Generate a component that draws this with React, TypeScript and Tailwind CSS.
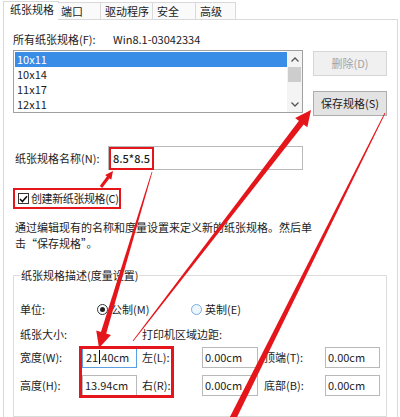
import React from 'react';

// Windows "打印服务器属性 > 纸张规格" page, with the red annotation arrows on top.

type P = [number, number];

const RED = '#e5161b';

const TABS = [
  { label: '纸张规格', cls: 'w-[56px] h-[19px] pl-[6px] pb-[3px] -mb-px bg-white border-x border-t border-[#d9d9d9]' },
  { label: '端口', cls: 'w-[43px] h-[17px] pl-[3px] -ml-px bg-[#fafafa] border-r border-t border-[#d9d9d9]' },
  { label: '驱动程序', cls: 'w-[52px] h-[17px] pl-[4px] bg-[#fafafa] border-r border-t border-[#d9d9d9]' },
  { label: '安全', cls: 'w-[43px] h-[17px] pl-[4px] bg-[#fafafa] border-r border-t border-[#d9d9d9]' },
  { label: '高级', cls: 'w-[40px] h-[17px] pl-[4px] bg-[#fafafa] border-r border-t border-[#d9d9d9]' },
];

const SIZES = ['10x11', '10x14', '11x17', '12x11'];

function taper(a: P, b: P, wa: number, wb: number): string {
  const dx = b[0] - a[0];
  const dy = b[1] - a[1];
  const l = Math.hypot(dx, dy);
  const nx = -dy / l;
  const ny = dx / l;
  const pts: P[] = [
    [a[0] + (nx * wa) / 2, a[1] + (ny * wa) / 2],
    [b[0] + (nx * wb) / 2, b[1] + (ny * wb) / 2],
    [b[0] - (nx * wb) / 2, b[1] - (ny * wb) / 2],
    [a[0] - (nx * wa) / 2, a[1] - (ny * wa) / 2],
  ];
  return pts.map((p) => p.join(',')).join(' ');
}

function Arrow({ from, tip, w0, w1, head }: { from: P; tip: P; w0: number; w1: number; head: number }) {
  const dx = tip[0] - from[0];
  const dy = tip[1] - from[1];
  const l = Math.hypot(dx, dy);
  const ux = dx / l;
  const uy = dy / l;
  const base: P = [tip[0] - ux * head, tip[1] - uy * head];
  const hw = head * 0.48;
  const headPts = [tip, [base[0] - uy * hw, base[1] + ux * hw], [base[0] + uy * hw, base[1] - ux * hw]]
    .map((p) => p.join(','))
    .join(' ');
  return (
    <g fill={RED}>
      <polygon points={taper(from, [base[0] + ux * 2, base[1] + uy * 2], w0, w1)} />
      <polygon points={headPts} />
    </g>
  );
}

function Field({ children, w, focus }: { children: React.ReactNode; w: string; focus?: boolean }) {
  return (
    <div className={`${w} h-[21px] flex items-center border bg-white ${focus ? 'border-[#5b9fe3] pl-[3px]' : 'border-[#b9b9b9] pl-[2px]'}`}>
      {children}
    </div>
  );
}

function Radio({ on }: { on?: boolean }) {
  return on ? (
    <span className="w-[11px] h-[11px] rounded-full border border-[#333] flex items-center justify-center bg-white">
      <span className="w-[5px] h-[5px] rounded-full bg-[#222]" />
    </span>
  ) : (
    <span className="w-[11px] h-[11px] rounded-full border border-[#74aee6] bg-[#eef6fd]" />
  );
}

export default function App() {
  return (
    <div className="relative w-[400px] h-[417px] overflow-hidden bg-white text-[11px] leading-none text-[#1c1c1c] font-['Noto_Sans_CJK_SC','Microsoft_YaHei',sans-serif]">
      {/* tabs */}
      <div className="relative z-10 flex items-end h-[19px] pl-[3px]">
        {TABS.map((t) => (
          <div key={t.label} className={`flex items-center ${t.cls}`}>
            {t.label}
          </div>
        ))}
      </div>

      {/* tab page */}
      <div className="ml-[3px] w-[395px] h-[398px] border-x border-t border-[#d9d9d9] pl-[9px] flex flex-col">
        <div className="mt-[13px] h-[13px] flex items-center">
          <span className="w-[100px]">所有纸张规格(F):</span>
          <span>Win8.1-03042334</span>
        </div>

        <div className="mt-[5px] flex items-start">
          <div className="w-[290px] h-[63px] border border-[#a0a0a0] flex">
            <div className="flex-1 pt-px">
              {SIZES.map((s, i) => (
                <div
                  key={s}
                  className={`h-[15px] ml-px pl-[2px] flex items-center ${i === 0 ? 'bg-[#3a8de6] text-white' : ''}`}
                >
                  {s}
                </div>
              ))}
            </div>
            <div className="w-[15px] flex flex-col bg-[#f4f4f4]">
              <div className="h-[16px] flex items-center justify-center">
                <svg width="8" height="5" viewBox="0 0 8 5">
                  <polyline points="0.5,4.5 4,1 7.5,4.5" fill="none" stroke="#555" strokeWidth="1.3" />
                </svg>
              </div>
              <div className="h-[15px] mx-px bg-[#cdcdcd]" />
              <div className="flex-1" />
              <div className="h-[16px] flex items-center justify-center">
                <svg width="8" height="5" viewBox="0 0 8 5">
                  <polyline points="0.5,0.5 4,4 7.5,0.5" fill="none" stroke="#555" strokeWidth="1.3" />
                </svg>
              </div>
            </div>
          </div>
          <div className="ml-[10px] mt-px flex flex-col">
            <div className="w-[74px] h-[25px] flex items-center justify-center bg-[#f0f0f0] border border-[#d6d6d6] text-[#a3a3a3]">
              删除(D)
            </div>
            <div className="mt-[15px] w-[74px] h-[25px] flex items-center justify-center bg-[#e3e3e3] border border-[#adadad]">
              保存规格(S)
            </div>
          </div>
        </div>

        <div className="mt-[30px] flex items-center">
          <span className="w-[95px] pl-[2px]">纸张规格名称(N):</span>
          <div className="w-[195px] h-[24px] border border-[#b9b9b9] flex items-stretch">
            <span className="h-[23px] px-[2px] border-2 border-[#e5161b] flex items-center font-medium">8.5*8.5</span>
          </div>
        </div>

        <div className="mt-[18px] w-fit h-[22px] border-2 border-[#e5161b] flex items-center pl-[3px] pr-px whitespace-nowrap">
          <span className="w-[11px] h-[11px] shrink-0 border border-[#333] bg-white flex items-center justify-center">
            <svg width="9" height="8" viewBox="0 0 9 8">
              <polyline points="1,4 3.4,6.5 8,1.2" fill="none" stroke="#111" strokeWidth="1.6" />
            </svg>
          </span>
          <span className="ml-[2px] tracking-[-0.4px]">创建新纸张规格(C)</span>
        </div>

        <p className="mt-[10px] pl-[2px] leading-[16px] whitespace-nowrap">
          通过编辑现有的名称和度量设置来定义新的纸张规格。然后单
          <br />
          击“保存规格”。
        </p>

        {/* group box */}
        <div className="relative mt-[24px] w-[374px] h-[150px] border border-[#dcdcdc] pl-[6px] flex flex-col">
          <span className="absolute left-[6px] -top-[7px] bg-white px-px leading-[13px]">纸张规格描述(度量设置)</span>

          <div className="mt-[26px] h-[14px] flex items-center">
            <span className="w-[77px]">单位:</span>
            <span className="w-[94px] flex items-center">
              <Radio on />
              <span className="ml-[3px]">公制(M)</span>
            </span>
            <span className="flex items-center">
              <Radio />
              <span className="ml-[3px]">英制(E)</span>
            </span>
          </div>

          <div className="mt-[11px] h-[14px] flex items-center">
            <span className="w-[122px]">纸张大小:</span>
            <span>打印机区域边距:</span>
          </div>

          <div className="mt-[6px] flex items-center">
            <span className="w-[62px]">宽度(W):</span>
            <Field w="w-[55px]" focus>
              21
              <span className="relative">
                .<span className="absolute left-[1px] -top-[2px] w-px h-[14px] bg-[#111]" />
              </span>
              40cm
            </Field>
            <span className="w-[65px] pl-[5px]">左(L):</span>
            <Field w="w-[56px]">0.00cm</Field>
            <span className="w-[67px] pl-[6px]">顶端(T):</span>
            <Field w="w-[55px]">0.00cm</Field>
          </div>

          <div className="mt-[7px] flex items-center">
            <span className="w-[62px]">高度(H):</span>
            <Field w="w-[55px]">13.94cm</Field>
            <span className="w-[65px] pl-[5px]">右(R):</span>
            <Field w="w-[56px]">0.00cm</Field>
            <span className="w-[67px] pl-[6px]">底部(B):</span>
            <Field w="w-[55px]">0.00cm</Field>
          </div>
        </div>
      </div>

      {/* annotations */}
      <div className="absolute left-[79px] top-[346px] w-[95px] h-[52px] border-[3px] border-[#e5161b]" />
      <svg className="absolute inset-0 pointer-events-none" width="400" height="417" viewBox="0 0 400 417">
        <polygon points={taper([232, 420], [385, 113], 6.5, 0.8)} fill={RED} />
        <Arrow from={[133, 341]} tip={[311, 110]} w0={0.8} w1={6} head={16} />
        <Arrow from={[152, 172]} tip={[99, 348]} w0={0.8} w1={5.5} head={16} />
        <Arrow from={[101, 187]} tip={[113, 171]} w0={3} w1={3.2} head={8} />
      </svg>
    </div>
  );
}
